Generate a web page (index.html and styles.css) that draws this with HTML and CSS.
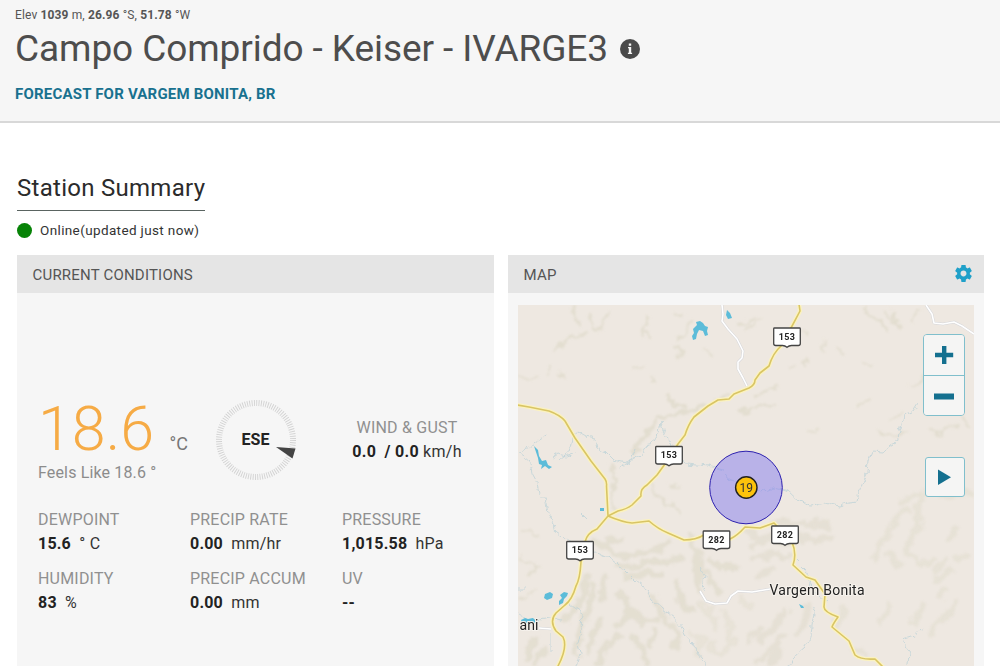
FILE: index.html
```html
<!DOCTYPE html>
<html lang="en">
<head>
  <meta charset="UTF-8" />
  <title>Campo Comprido - Keiser - IVARGE3</title>
  <link rel="stylesheet" href="styles.css">
</head>
<body>
  <header class="station-header">
    <div class="elev">Elev <b>1039</b> m, <b>26.96</b> °S, <b>51.78</b> °W</div>
    <h1>
      <span class="station-name">Campo Comprido - Keiser - IVARGE3</span>
      <svg class="info" viewBox="0 0 20 20"><circle cx="10" cy="10" r="10" fill="#4a4a4a"/><path d="M8.800 4.500h2.400v2.200H8.800zM8 8h3.200v5.800h.9V15H7.900v-1.200h.9V9.200H8z" fill="#f6f6f6"/></svg>
    </h1>
    <a class="forecast" href="#">FORECAST FOR VARGEM BONITA, BR</a>
  </header>

  <main>
    <h2>Station Summary</h2>
    <div class="online"><span class="dot"></span><span>Online(updated just now)</span></div>

    <div class="panels">
      <section class="panel">
        <div class="panel-title">CURRENT CONDITIONS</div>
        <div class="conditions">
          <div class="top-row">
            <div class="temp-block">
              <div class="temp"><span class="temp-value">18.6</span><span class="temp-unit">°C</span></div>
              <div class="feels">Feels Like 18.6 °</div>
            </div>
            <svg class="compass" viewBox="0 0 82 82">
              <circle cx="41" cy="41" r="37" fill="none" stroke="#d2d2d2" stroke-width="6" stroke-dasharray=".9 1.425"/>
              <path d="M61 48l19.500 1.500-3 10z" fill="#444"/>
              <text x="40.500" y="46" text-anchor="middle" class="compass-text">ESE</text>
            </svg>
            <div class="wind">
              <div class="label">WIND &amp; GUST</div>
              <div class="value"><b>0.0 &nbsp;/ 0.0</b> km/h</div>
            </div>
          </div>

          <div class="readings">
            <div><div class="label">DEWPOINT</div><div class="value"><b>15.6</b> &nbsp;° C</div></div>
            <div><div class="label">PRECIP RATE</div><div class="value"><b>0.00</b> &nbsp;mm/hr</div></div>
            <div><div class="label">PRESSURE</div><div class="value"><b>1,015.58</b> &nbsp;hPa</div></div>
            <div><div class="label">HUMIDITY</div><div class="value"><b>83</b> &nbsp;%</div></div>
            <div><div class="label">PRECIP ACCUM</div><div class="value"><b>0.00</b> &nbsp;mm</div></div>
            <div><div class="label">UV</div><div class="value"><b>--</b></div></div>
          </div>
        </div>
      </section>

      <section class="panel">
        <div class="panel-title">
          <span>MAP</span>
          <svg class="gear" viewBox="2 2 20 20"><path fill="#1fa0c9" d="M19.430 12.980c.04-.32.07-.64.07-.98s-.03-.66-.07-.98l2.110-1.650c.19-.15.24-.42.12-.64l-2-3.460c-.12-.22-.39-.3-.61-.22l-2.490 1c-.52-.4-1.080-.73-1.690-.98l-.38-2.650C14.460 2.180 14.250 2 14 2h-4c-.25 0-.46.18-.49.42l-.38 2.650c-.61.25-1.170.59-1.690.98l-2.490-1c-.23-.09-.49 0-.61.22l-2 3.460c-.13.22-.07.49.12.64l2.110 1.650c-.04.32-.07.65-.07.98s.03.66.07.98l-2.110 1.650c-.19.15-.24.42-.12.64l2 3.460c.12.22.39.3.61.22l2.490-1c.52.4 1.080.73 1.690.98l.38 2.650c.03.24.24.42.49.42h4c.25 0 .46-.18.49-.42l.38-2.650c.61-.25 1.170-.59 1.690-.98l2.490 1c.23.09.49 0 .61-.22l2-3.460c.12-.22.07-.49-.12-.64l-2.110-1.650zM12 15.500c-1.930 0-3.500-1.570-3.500-3.500s1.570-3.500 3.500-3.500 3.500 1.570 3.500 3.500-1.570 3.500-3.500 3.500z"/></svg>
        </div>
        <div class="map">
          <svg class="map-canvas" viewBox="518 305 456 361">
            <defs>
              <path id="shield" d="M-12.500-9.500h25a.8.8 0 0 1 .8.800V6q0 2-2 2H4.500Q2 8 0 9.800-2 8-4.500 8h-6.800q-2 0-2-2V-8.700a.8.8 0 0 1 .8-.8z"/>
              <!-- breaks up straight strokes so slopes look eroded -->
              <filter id="terrain" filterUnits="userSpaceOnUse" x="518" y="305" width="456" height="361">
                <feTurbulence type="fractalNoise" baseFrequency=".09" numOctaves="3" seed="4"/>
                <feDisplacementMap in="SourceGraphic" scale="13" xChannelSelector="R" yChannelSelector="G"/>
                <feGaussianBlur stdDeviation="1"/>
              </filter>
              <filter id="meander" filterUnits="userSpaceOnUse" x="518" y="305" width="456" height="361">
                <feTurbulence type="fractalNoise" baseFrequency=".16" numOctaves="2" seed="9"/>
                <feDisplacementMap in="SourceGraphic" scale="7" xChannelSelector="R" yChannelSelector="G"/>
              </filter>
            </defs>
            <rect x="518" y="305" width="456" height="361" fill="#eee8e1"/>

            <!-- hill shading -->
            <g class="hills" filter="url(#terrain)">
              <path d="M574 308l3 10 1 8M590 314l3 10 4 8 7-10 4-10M648 318l-4 12 2 8M553 350l6-5 6-2 5-4 8-2 8-5M673 313l9 4M690 322l-4 9-8 9M672 345l8 5-2 8M706 352l7 4M520 376l10 4 10-1M634 367h9M550 367l-3 6M652 380l5 3M564 376l-5-4"/>
              <path d="M738 327l8-3 8-7M760 318l-12 10M800 330l6 3M840 348l4 6M865 360l6 5M865 310l12 8 8 12M885 310l4 8 12 6M895 315l5 12M920 310l-8 12M778 386l-25 12M750 408l28-3M790 370l6-3M857 405l10-3 5-3M808 431l9-1M912 385l12-8M940 390l12-5M928 430l12 2 10-8 7 4M960 420l10 4M880 432l14 4 12-3M890 420l10-6M824 340l-2 10M805 365l3-8"/>
              <path d="M636 447l8-10 8-12 9-8 10-2 14-2 8-3 12-5M668 396l8 8 10 3M641 440l-7 14M718 400l12-5M740 412l10-2M650 430l-5 6" stroke-width="4"/>
              <path d="M650 486l8 10 10 7 11 7M668 485l12 4M610 462l4 9-2 22 1 19M522 530l14 4M522 556l8 7 10 5M530 575l6-8M520 600l8-5M538 590l-6 5"/>
            </g>
            <g class="hills hills-wide" filter="url(#terrain)">
              <path d="M596 543l15 7 15 7 20-5 14-4 10-7M615 566l15 2 20-7 20 1 12-5M628 578l18-5 14 2M606 541l12-3M690 535l7 20 3 15-2 18M704 574l9 8 5 10M710 560l16 8 12-2"/>
              <path d="M587 575l-2 18-9 14-10 12M594 584l-4 26-10 18-4 25M606 579l-5 20M618 592l9 8 2 14-9 12M600 620l-7 10-4 22M618 636l-15 14-5 13M632 610l12 13 12-4M651 598l10 10 3 14M676 583l5 18 10 11M631 637l10 10 6 15M657 632l-8 12M534 642l-7 16M545 650l-9 14M670 625l9 9-5 12"/>
              <path d="M747 530l12 8 16-2M752 545l16-5 20 4 10-4M800 535l16 6 12-3M756 559l20-6 12 4M770 570l-12 7M774 522l28 3 18-2 10 4M785 612l-16 20-10 9M760 628l-8 10M784 635l-12 15-14 12M808 608l-2 12-10 15M781 648l-10 16" opacity=".8"/>
              <path d="M875 560l3-14 9-8 2-9 8-12 12-8M903 500l10-5 14-3 20 3 20-4 8 5M922 500l-5 12 2 17-9 9-4 15M890 553l9 12M908 553l13 12 10-4M944 562l-8 8M937 578l12-6M955 528l-4 10M956 558l10-2M943 590l-3 8M925 605l-12 16M942 620l-10 12M955 602l-8 15M890 606l-9 15M846 610l-10 12M855 650l10 4" opacity=".65"/>
              <path d="M700 605l12 8 4 15M724 612l7 12-4 13M740 599l10 8M690 632l11 9-4 14M710 644l10 8M733 640l-9 15" opacity=".6"/>
            </g>

            <!-- streams -->
            <g class="streams" filter="url(#meander)">
              <path d="M519 453l5 4 6 5 2 12 5 9 2 10 7 8 2 12 5 8 3 12 9 6 16 9 12 3 20 9 12 10 10 10 9 7 8 12 11 10 11 8 8 10 3 9 8 7 5 10 7 9 3 11 8 4 9 9 8 10"/>
              <path d="M518 452l10-4 10-8 8-5M559 460l12-10 2-14 5-4 7 4 10 2 2 10 8 4 8 8 14 3 7-5 8-3 3-10 8-2 6-10 2-12 2 10 7 10 3 9 12 14 24 2 15 4 6 10 10 2 8 6 12 4 14-4 15 4 10 9 12 4 14-3 14 4 10-3 8-1 2-10 4-11 4-8 1-13 4-9 12 1 6-7 7-3 4-15 3-12 8-3 5-8"/>
              <path d="M575 453l-9 3-8-2-6 4M620 468l10-6 5-13M587 520l-6-6M518 613l12 7 10-1 10-2 12 3M567 602l8 6 7 5-1 18-3 12 2 10-4 13M700 566l5 10-2 13M518 588h8M810 580l4 12 12 10M815 608l-3 17-1 12-6 10-9 8-6 11M902 639l12-4 10-8M902 639l7 13-1 14M794 558l12 12 4 16M551 635v18"/>
            </g>

            <!-- lakes -->
            <path fill="#5cbcd9" d="M693 340l-1-4 2-3-1-4 4-4-1-3 4-1 3 2 2 3 3 1-1 4 1 4-3 1-2-5-4-1-2 4-1 5zM727 310l3 3 2 5-4 1-2-4zM534 446l4 4 1 6 3 5 4-1 2 5 4 2-3 2-4-3-4 3 1-4-3-1-1-6zM600 508h4v3h-4zM545 594l5-2 3 2-1 4-5 2-3-2zM560 595l4-3 4 1-1 3-3 3-1 4-4 2v-4l3-3zM521 620l4-2 3 1 5-1 3 3 3-1-2 3-15 1zM799 604l4 2 1 2h-3z"/>

            <!-- minor roads -->
            <g fill="none" stroke-linejoin="round">
              <path d="M722 305l1 9-1 7 6 8 9 10 6 12-1 7-4 4v7l5 9 4 8M926 305l6 9 2 9 9 1 11-2 8 4 12 8M700 591l6 10 9 3 12-1 4-7 7-5 14 1 18-3M539 628l12 1" stroke="#d5d6da" stroke-width="2.600"/>
              <path d="M722 305l1 9-1 7 6 8 9 10 6 12-1 7-4 4v7l5 9 4 8M926 305l6 9 2 9 9 1 11-2 8 4 12 8M700 591l6 10 9 3 12-1 4-7 7-5 14 1 18-3M539 628l12 1" stroke="#fff" stroke-width="1.600"/>
            </g>

            <!-- highways -->
            <g fill="none" stroke-linejoin="round" stroke-linecap="round">
              <path class="hw-casing" d="M517 405l12 2 20 4q11 4 16 10l10 17 16 23 14 18q2 3 1.500 7L608 516l10-5q9-2 14-6l9-9q-1-7 6-11l10-10 8-11 13-20 7-9q3-10 9-18l14-11 10-6 11-1 5-5 15-6q6-3 6-8l5-7 9-7q4-13 12-20l10-18 9-17-1-7 6-20M608 516q14 6 24 7l17-2q9 8 19 12l16 7q12 0 20-5l26 4q7-3 15-12l15 1 14-5 18 19q5 12 1 23l13 12 9 3 10 14-1 13q0 5 14 10-5 7-6 10l17 14 6 14q6 5 20 4l9 9M608 516l-11 13q-10 4-12 13l-4 20q-1 17-5 24-4 14-11 19l-9 8q-7 8 0 18l7 6q5 10-5 29"/>
              <path class="hw-line" d="M517 405l12 2 20 4q11 4 16 10l10 17 16 23 14 18q2 3 1.500 7L608 516l10-5q9-2 14-6l9-9q-1-7 6-11l10-10 8-11 13-20 7-9q3-10 9-18l14-11 10-6 11-1 5-5 15-6q6-3 6-8l5-7 9-7q4-13 12-20l10-18 9-17-1-7 6-20M608 516q14 6 24 7l17-2q9 8 19 12l16 7q12 0 20-5l26 4q7-3 15-12l15 1 14-5 18 19q5 12 1 23l13 12 9 3 10 14-1 13q0 5 14 10-5 7-6 10l17 14 6 14q6 5 20 4l9 9M608 516l-11 13q-10 4-12 13l-4 20q-1 17-5 24-4 14-11 19l-9 8q-7 8 0 18l7 6q5 10-5 29"/>
            </g>

            <!-- road shields -->
            <g class="shields">
              <use href="#shield" x="787" y="337.500"/><text x="787" y="340">153</text>
              <use href="#shield" x="669" y="456"/><text x="669" y="458">153</text>
              <use href="#shield" x="580" y="551"/><text x="580" y="553">153</text>
              <use href="#shield" x="716.500" y="540.500"/><text x="716.500" y="543">282</text>
              <use href="#shield" x="785" y="535.500"/><text x="785" y="538">282</text>
            </g>

            <text class="town" x="769.500" y="594.500" textLength="95">Vargem Bonita</text>
            <text class="town" x="519.500" y="630" textLength="19">ani</text>

            <!-- station marker -->
            <circle cx="746" cy="487.500" r="36.300" fill="#847cf0" fill-opacity=".5" stroke="#2b1fae"/>
            <circle cx="746.300" cy="487.500" r="10.700" fill="#fcc20c" stroke="#222" stroke-width="1.400"/>
            <text class="marker" x="746.300" y="492">19</text>
          </svg>
          <div class="map-controls">
            <div class="zoom">
              <button type="button" aria-label="Zoom in"><svg viewBox="0 0 20 20"><path d="M8 1h4.400v6.800h6.800v4.400h-6.800V19H8v-6.800H1V7.800h7z"/></svg></button>
              <button type="button" aria-label="Zoom out"><svg viewBox="0 0 20 20"><path d="M0 7.500h20v6H0z"/></svg></button>
            </div>
            <button class="play" type="button" aria-label="Play"><svg viewBox="0 0 20 20"><path d="M3 2.500L16 10.300 3 18z"/></svg></button>
          </div>
        </div>
      </section>
    </div>
  </main>
</body>
</html>
```
FILE: styles.css
```css
* {
  box-sizing: border-box;
}
body {
  margin: 0;
  height: 666px;
  overflow: hidden;
  background: #fff;
  color: #2b2b2b;
  font-family: Roboto, "Liberation Sans", sans-serif;
}
.station-header {
  height: 123px;
  padding: 7px 15px 0;
  background: #f6f6f6;
  border-bottom: 2px solid #d8d8d8;
}
.elev {
  font-size: 12px;
  line-height: 16px;
  letter-spacing: 0.13px;
  color: #555;
}
h1 {
  display: flex;
  align-items: center;
  gap: 12px;
  margin: 0;
  height: 50px;
  font-size: 37px;
  font-weight: 400;
  letter-spacing: -0.08px;
  color: #4d4d4d;
}
.station-name {
  white-space: nowrap;
}
.info {
  width: 20px;
  height: 20px;
  margin-top: 1px;
}
.forecast {
  display: block;
  margin-top: 11px;
  font-size: 15px;
  letter-spacing: 0.2px;
  line-height: 20px;
  font-weight: 700;
  color: #19718f;
  text-decoration: none;
}
main {
  padding: 49px 16px 0 17px;
}
h2 {
  display: inline-block;
  margin: 0;
  height: 39px;
  line-height: 33px;
  font-size: 24px;
  letter-spacing: 0.28px;
  font-weight: 400;
  border-bottom: 1px solid #5a6461;
}
.online {
  display: flex;
  align-items: center;
  gap: 8px;
  height: 38px;
  font-size: 13.5px;
  letter-spacing: 0.37px;
  color: #333;
}
.dot {
  width: 15px;
  height: 15px;
  border-radius: 50%;
  background: #078307;
}
.panels {
  display: grid;
  grid-template-columns: 477px 476px;
  gap: 14px;
  margin-top: 6px;
}
.panel {
  height: 420px;
  background: #f6f6f6;
}
.panel-title {
  display: flex;
  align-items: center;
  justify-content: space-between;
  height: 38px;
  padding: 1px 12px 0 15.5px;
  background: #e5e5e5;
  color: #555;
  font-size: 15px;
  letter-spacing: 0.2px;
}
.gear {
  width: 17px;
  height: 17px;
  margin-bottom: 3px;
}
.conditions {
  padding: 106px 20px 0 21px;
}
.top-row {
  display: flex;
  height: 109px;
}
.temp-block {
  width: 177px;
}
.temp {
  display: flex;
  align-items: baseline;
  height: 64px;
  line-height: 60px;
}
.temp-value {
  width: 131.5px;
  font-size: 61px;
  font-weight: 300;
  color: #f6ab45;
}
.temp-unit {
  font-size: 18px;
  color: #777;
}
.feels {
  line-height: 20px;
  font-size: 16px;
  letter-spacing: 0.15px;
  color: #8c8c8c;
}
.compass {
  width: 82px;
  height: 82px;
}
.compass-text {
  font-size: 16px;
  font-weight: 700;
  fill: #222;
}
.wind {
  flex: 1;
  padding: 17px 0 0 43px;
  text-align: center;
}
.label {
  height: 24px;
  line-height: 24px;
  font-size: 16px;
  letter-spacing: 0.2px;
  color: #909090;
  white-space: nowrap;
}
.value {
  height: 25px;
  line-height: 24px;
  font-size: 16px;
  letter-spacing: 0.2px;
  color: #333;
  white-space: nowrap;
}
.value b {
  color: #222;
}
.wind .value {
  letter-spacing: 0.27px;
}
.readings {
  display: grid;
  grid-template-columns: 152px 152px 1fr;
  row-gap: 10px;
}
.map {
  position: relative;
  width: 456px;
  height: 361px;
  margin: 12px 0 0 10px;
}
.map-canvas {
  display: block;
  width: 456px;
  height: 361px;
}
.hills {
  fill: none;
  stroke: #dfdaca;
  stroke-width: 2.5;
  stroke-linecap: round;
  stroke-linejoin: round;
  opacity: 0.75;
}
.hills-wide {
  stroke-width: 6.5;
  opacity: 0.68;
}
.streams {
  fill: none;
  stroke: #bfd3d8;
  stroke-width: 0.8;
}
.hw-casing {
  stroke: #fbf2bf;
  stroke-width: 4.2;
}
.hw-line {
  stroke: #d9c564;
  stroke-width: 1.6;
}
.shields {
  fill: #fff;
  stroke: #444;
  stroke-width: 1.3;
}
.shields text {
  fill: #222;
  stroke: none;
  font-size: 9px;
  font-weight: 700;
  letter-spacing: 0.3px;
  text-anchor: middle;
}
.town {
  font-size: 14px;
  fill: #222;
  stroke: #f6f2ec;
  stroke-width: 2px;
  paint-order: stroke;
}
.marker {
  font-size: 12px;
  fill: #333;
  text-anchor: middle;
}
/* controls float over the map canvas */
.map-controls {
  position: absolute;
  top: 29px;
  right: 9.5px;
  display: flex;
  flex-direction: column;
  align-items: flex-end;
  gap: 41px;
}
.map-controls button {
  display: flex;
  align-items: center;
  justify-content: center;
  width: 100%;
  height: 40px;
  padding: 0;
  border: 0;
  background: #f5f5f4;
}
.map-controls svg {
  width: 20px;
  height: 20px;
  fill: #14708f;
}
.zoom {
  width: 42px;
  overflow: hidden;
  border: 1px solid #80bfcc;
  border-radius: 4px;
}
.zoom button + button {
  border-top: 1px solid #80bfcc;
}
.map-controls .play {
  width: 40px;
  border: 1px solid #80bfcc;
  border-radius: 3px;
}
```
